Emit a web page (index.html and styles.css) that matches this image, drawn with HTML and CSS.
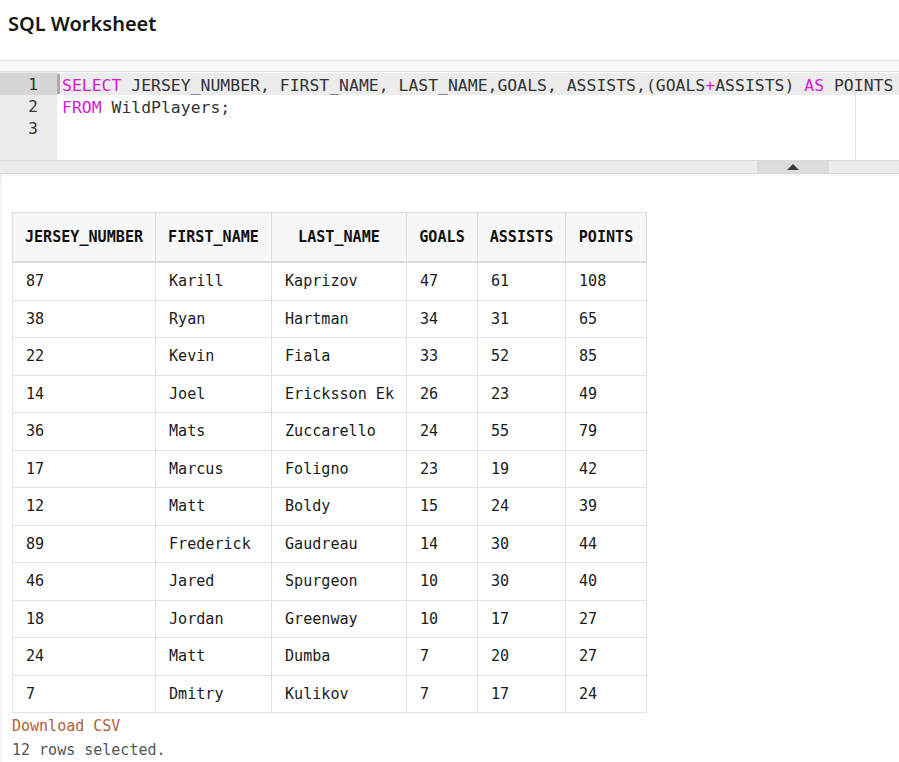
FILE: index.html
```html
<!DOCTYPE html>
<html>
<head>
<meta charset="utf-8">
<link rel="stylesheet" href="styles.css">
</head>
<body>
<h1 class="title">SQL Worksheet</h1>
<div class="band"></div>
<div class="editor">
  <div class="gutter">
    <div class="ln active">1</div>
    <div class="ln">2</div>
    <div class="ln">3</div>
  </div>
  <div class="code">
    <div class="margin-line"></div>
    <div class="cl active"><span class="cursor"></span><span class="kw">SELECT</span> JERSEY_NUMBER, FIRST_NAME, LAST_NAME,GOALS, ASSISTS,(GOALS<span class="kw">+</span>ASSISTS) <span class="kw">AS</span> POINTS</div>
    <div class="cl"><span class="kw">FROM</span> WildPlayers;</div>
    <div class="cl"></div>
  </div>
</div>
<div class="splitter"><div class="handle"><span class="tri"></span></div></div>
<div class="results">
  <table class="grid">
    <colgroup>
      <col class="c1"><col class="c2"><col class="c3"><col class="c4"><col class="c5"><col class="c6">
    </colgroup>
    <thead>
      <tr><th>JERSEY_NUMBER</th><th>FIRST_NAME</th><th>LAST_NAME</th><th>GOALS</th><th>ASSISTS</th><th>POINTS</th></tr>
    </thead>
    <tbody>
      <tr><td>87</td><td>Karill</td><td>Kaprizov</td><td>47</td><td>61</td><td>108</td></tr>
      <tr><td>38</td><td>Ryan</td><td>Hartman</td><td>34</td><td>31</td><td>65</td></tr>
      <tr><td>22</td><td>Kevin</td><td>Fiala</td><td>33</td><td>52</td><td>85</td></tr>
      <tr><td>14</td><td>Joel</td><td>Ericksson Ek</td><td>26</td><td>23</td><td>49</td></tr>
      <tr><td>36</td><td>Mats</td><td>Zuccarello</td><td>24</td><td>55</td><td>79</td></tr>
      <tr><td>17</td><td>Marcus</td><td>Foligno</td><td>23</td><td>19</td><td>42</td></tr>
      <tr><td>12</td><td>Matt</td><td>Boldy</td><td>15</td><td>24</td><td>39</td></tr>
      <tr><td>89</td><td>Frederick</td><td>Gaudreau</td><td>14</td><td>30</td><td>44</td></tr>
      <tr><td>46</td><td>Jared</td><td>Spurgeon</td><td>10</td><td>30</td><td>40</td></tr>
      <tr><td>18</td><td>Jordan</td><td>Greenway</td><td>10</td><td>17</td><td>27</td></tr>
      <tr><td>24</td><td>Matt</td><td>Dumba</td><td>7</td><td>20</td><td>27</td></tr>
      <tr><td>7</td><td>Dmitry</td><td>Kulikov</td><td>7</td><td>17</td><td>24</td></tr>
    </tbody>
  </table>
  <div class="download">Download CSV</div>
  <div class="rowcount">12 rows selected.</div>
</div>
</body>
</html>
```
FILE: styles.css
```css
html, body {
  margin: 0;
  padding: 0;
  background: #fff;
}
body {
  font-family: "DejaVu Sans Mono", "Liberation Mono", monospace;
  color: #222;
}
.title {
  margin: 0;
  height: 60px;
  box-sizing: border-box;
  padding: 10px 8px 0;
  font-family: "Noto Sans", "Open Sans", sans-serif;
  font-weight: 600;
  font-size: 20px;
  line-height: 28px;
  color: #161616;
}
.band {
  height: 10px;
  background: #f9f9f9;
  border-top: 1px solid #e2e2e2;
  border-bottom: 1px solid #e2e2e2;
}
.editor {
  display: flex;
  height: 88px;
  background: #fff;
}
.gutter {
  width: 57px;
  background: #ebebeb;
  padding-top: 1px;
  box-sizing: border-box;
}
.ln {
  height: 22px;
  line-height: 24px;
  text-align: right;
  padding-right: 19px;
  font-size: 16px;
  color: #333;
}
.ln.active {
  background: #d6d6d6;
}
.code {
  flex: 1;
  position: relative;
  padding-top: 1px;
}
.margin-line {
  position: absolute;
  left: 798px;
  top: 0;
  bottom: 0;
  width: 1px;
  background: #e2e2e2;
}
.cl {
  position: relative;
  height: 22px;
  line-height: 25px;
  padding-left: 5px;
  font-size: 16.45px;
  white-space: pre;
  color: #333;
  overflow: hidden;
}
.cl.active {
  background: rgba(230, 230, 230, 0.75);
}
.cursor {
  position: absolute;
  left: 0;
  top: 1px;
  width: 3px;
  height: 20px;
  background: #aaa;
}
.kw {
  color: #d61ad6;
}
.splitter {
  height: 12px;
  background: #ececec;
  border-top: 1px solid #d9d9d9;
  border-bottom: 1px solid #d9d9d9;
  box-shadow: 0 2px 3px rgba(0, 0, 0, 0.04);
  position: relative;
}
.handle {
  position: absolute;
  left: 757px;
  top: 0;
  width: 72px;
  height: 12px;
  background: #dcdcdc;
  display: flex;
  align-items: center;
  justify-content: center;
}
.tri {
  width: 0;
  height: 0;
  border-left: 6px solid transparent;
  border-right: 6px solid transparent;
  border-bottom: 6px solid #3c3c3c;
}
.results {
  padding: 38px 12px 0 10px;
  border-left: 2px solid #f2f2f2;
  min-height: 560px;
}
.grid {
  border-collapse: collapse;
  table-layout: fixed;
  width: 634px;
  font-size: 15.1px;
}
.c1 { width: 143px; }
.c2 { width: 116px; }
.c3 { width: 135px; }
.c4 { width: 71px; }
.c5 { width: 88px; }
.c6 { width: 81px; }
.grid th {
  background: #f7f7f7;
  height: 48px;
  padding: 0 4px;
  font-weight: bold;
  color: #111;
  text-align: center;
  border: 1px solid #dedede;
  border-bottom: 2px solid #dcdcdc;
  white-space: nowrap;
}
.grid td {
  height: 36.5px;
  padding: 0 0 0 13px;
  text-align: left;
  border: 1px solid #e2e2e2;
  white-space: nowrap;
  color: #1a1a1a;
}
.download {
  margin-top: 1px;
  font-size: 15px;
  line-height: 24px;
  color: #b0603a;
}
.rowcount {
  font-size: 15px;
  line-height: 24px;
  color: #555;
}
```
